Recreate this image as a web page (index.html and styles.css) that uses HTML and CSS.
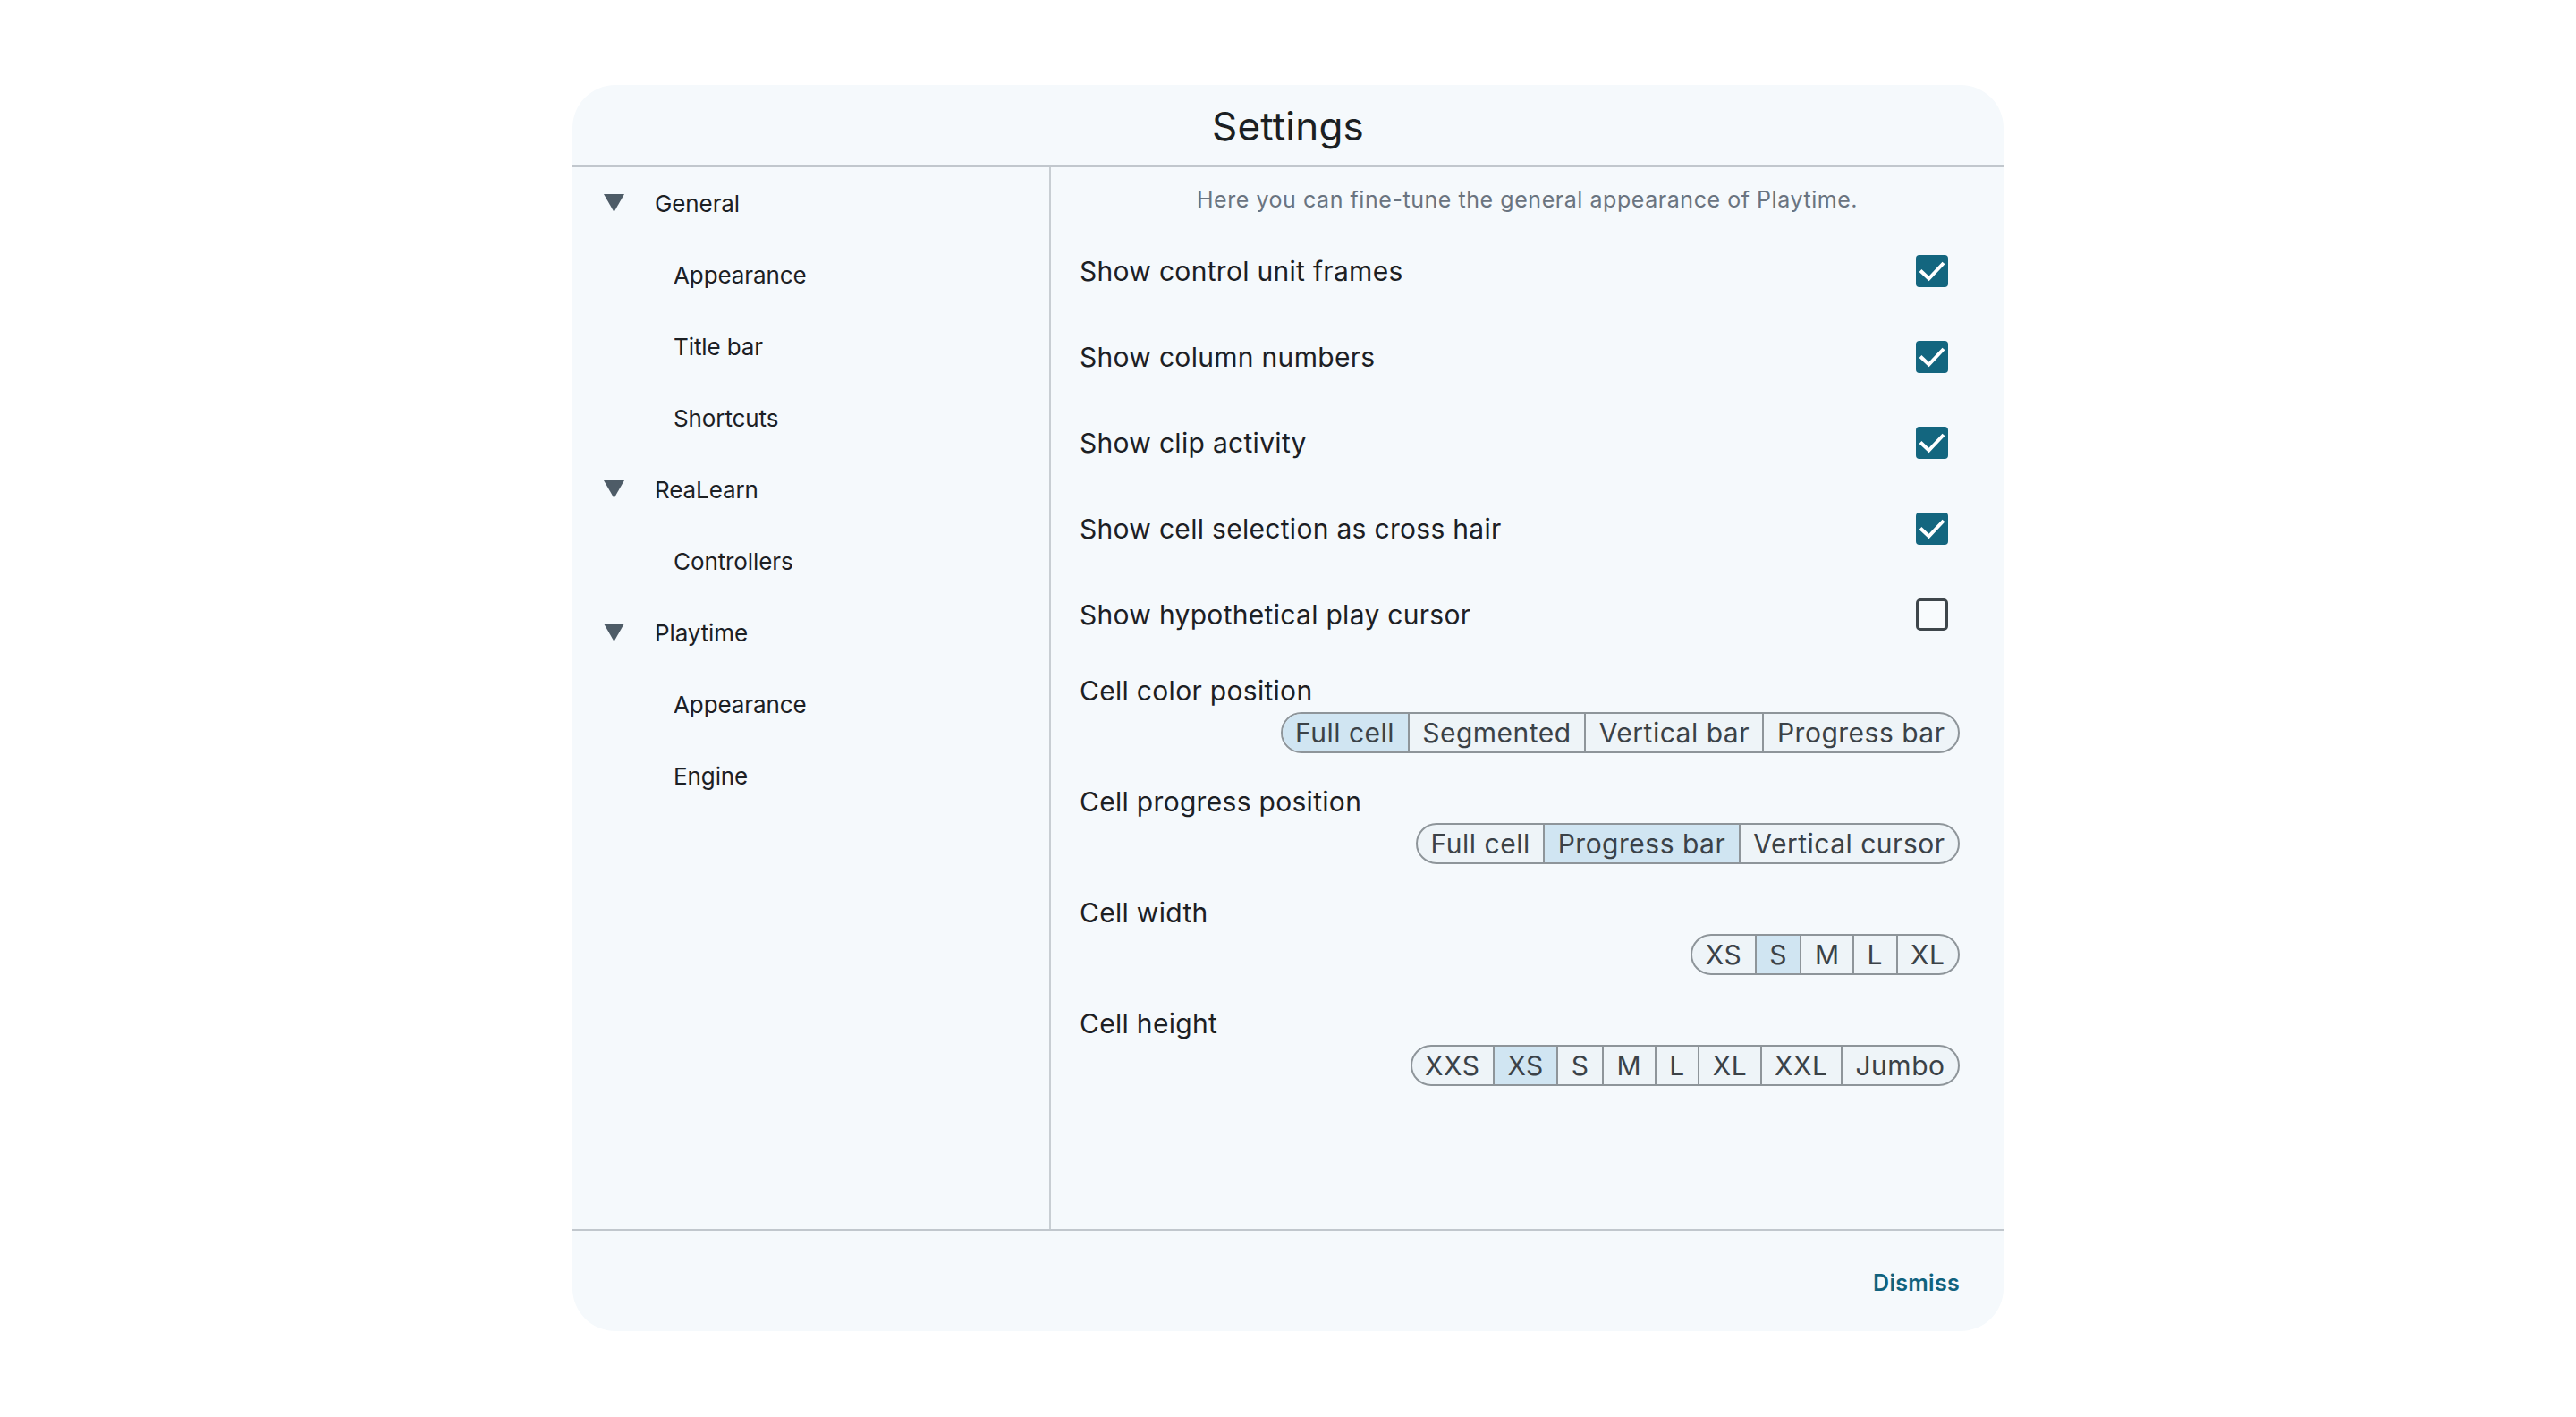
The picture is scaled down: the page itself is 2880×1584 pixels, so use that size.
FILE: index.html
```html
<!DOCTYPE html>
<html lang="en">
<head>
<meta charset="utf-8">
<title>Settings</title>
<link rel="stylesheet" href="styles.css">
</head>
<body>
<div class="dialog">
  <header class="dialog-header">
    <h1 class="dialog-title">Settings</h1>
  </header>
  <div class="dialog-body">
    <nav class="sidebar">
      <div class="nav-group">
        <svg class="caret" viewBox="0 0 23 20"><polygon points="0,0 23,0 11.5,20"/></svg>
        <span>General</span>
      </div>
      <div class="nav-item">Appearance</div>
      <div class="nav-item">Title bar</div>
      <div class="nav-item">Shortcuts</div>
      <div class="nav-group">
        <svg class="caret" viewBox="0 0 23 20"><polygon points="0,0 23,0 11.5,20"/></svg>
        <span>ReaLearn</span>
      </div>
      <div class="nav-item">Controllers</div>
      <div class="nav-group">
        <svg class="caret" viewBox="0 0 23 20"><polygon points="0,0 23,0 11.5,20"/></svg>
        <span>Playtime</span>
      </div>
      <div class="nav-item">Appearance</div>
      <div class="nav-item">Engine</div>
    </nav>
    <main class="content">
      <p class="description">Here you can fine-tune the general appearance of Playtime.</p>

      <div class="check-row">
        <span class="label">Show control unit frames</span>
        <svg class="checkbox" viewBox="0 0 36 36"><rect width="36" height="36" rx="4" class="cb-fill"/><polyline points="5,17.5 14.5,26.5 31,9" class="cb-mark"/></svg>
      </div>
      <div class="check-row">
        <span class="label">Show column numbers</span>
        <svg class="checkbox" viewBox="0 0 36 36"><rect width="36" height="36" rx="4" class="cb-fill"/><polyline points="5,17.5 14.5,26.5 31,9" class="cb-mark"/></svg>
      </div>
      <div class="check-row">
        <span class="label">Show clip activity</span>
        <svg class="checkbox" viewBox="0 0 36 36"><rect width="36" height="36" rx="4" class="cb-fill"/><polyline points="5,17.5 14.5,26.5 31,9" class="cb-mark"/></svg>
      </div>
      <div class="check-row">
        <span class="label">Show cell selection as cross hair</span>
        <svg class="checkbox" viewBox="0 0 36 36"><rect width="36" height="36" rx="4" class="cb-fill"/><polyline points="5,17.5 14.5,26.5 31,9" class="cb-mark"/></svg>
      </div>
      <div class="check-row">
        <span class="label">Show hypothetical play cursor</span>
        <svg class="checkbox" viewBox="0 0 36 36"><rect x="1.5" y="1.5" width="33" height="33" rx="3.5" class="cb-empty"/></svg>
      </div>

      <div class="seg-row">
        <span class="label">Cell color position</span>
        <div class="segmented">
          <span class="seg selected">Full cell</span>
          <span class="seg">Segmented</span>
          <span class="seg">Vertical bar</span>
          <span class="seg">Progress bar</span>
        </div>
      </div>
      <div class="seg-row">
        <span class="label">Cell progress position</span>
        <div class="segmented">
          <span class="seg">Full cell</span>
          <span class="seg selected">Progress bar</span>
          <span class="seg">Vertical cursor</span>
        </div>
      </div>
      <div class="seg-row">
        <span class="label">Cell width</span>
        <div class="segmented">
          <span class="seg">XS</span>
          <span class="seg selected">S</span>
          <span class="seg">M</span>
          <span class="seg">L</span>
          <span class="seg">XL</span>
        </div>
      </div>
      <div class="seg-row">
        <span class="label">Cell height</span>
        <div class="segmented">
          <span class="seg">XXS</span>
          <span class="seg selected">XS</span>
          <span class="seg">S</span>
          <span class="seg">M</span>
          <span class="seg">L</span>
          <span class="seg">XL</span>
          <span class="seg">XXL</span>
          <span class="seg">Jumbo</span>
        </div>
      </div>
    </main>
  </div>
  <footer class="dialog-footer">
    <button class="dismiss" type="button">Dismiss</button>
  </footer>
</div>
</body>
</html>
```

FILE: styles.css
```css
html, body {
  margin: 0;
  padding: 0;
  background: #ffffff;
}

body {
  font-family: Inter, "Noto Sans", "Liberation Sans", sans-serif;
  color: #1c2024;
}

.dialog {
  width: 1600px;
  height: 1393px;
  margin: 95px auto 0;
  background: #f5f9fc;
  border-radius: 48px;
  display: flex;
  flex-direction: column;
  overflow: hidden;
}

.dialog-header {
  height: 90px;
  flex: none;
  display: flex;
  align-items: center;
  justify-content: center;
  border-bottom: 2px solid #c1c7cd;
}

.dialog-title {
  margin: 0;
  font-size: 44px;
  font-weight: 400;
  color: #1b1f23;
  letter-spacing: 0.2px;
  padding-top: 2px;
}

.dialog-body {
  flex: 1;
  display: flex;
  min-height: 0;
}

.sidebar {
  width: 533px;
  flex: none;
  border-right: 2px solid #c8ced3;
}

.nav-group,
.nav-item {
  height: 80px;
  display: flex;
  align-items: center;
  font-size: 26px;
  letter-spacing: -0.1px;
  color: #1c2024;
}

.nav-group {
  padding-left: 35px;
}

.caret {
  width: 23px;
  height: 20px;
  margin-right: 34px;
  fill: #4e5c67;
}

.nav-item {
  padding-left: 113px;
}

.content {
  flex: 1;
  display: flex;
  flex-direction: column;
  padding-top: 20px;
}

.description {
  margin: 0 0 16px;
  text-align: center;
  font-size: 25px;
  line-height: 32px;
  letter-spacing: 0.55px;
  color: #6a7480;
}

.label {
  font-size: 30px;
  letter-spacing: 0.3px;
  color: #1c2024;
  line-height: 40px;
}

.check-row {
  height: 96px;
  display: flex;
  align-items: center;
  justify-content: space-between;
  padding: 0 62px 0 32px;
}

.checkbox {
  width: 36px;
  height: 36px;
  flex: none;
}

.cb-fill {
  fill: #13667f;
}

.cb-mark {
  fill: none;
  stroke: #ffffff;
  stroke-width: 4;
}

.cb-empty {
  fill: #f8fbfd;
  stroke: #3e464b;
  stroke-width: 3;
}

.seg-row {
  display: flex;
  flex-direction: column;
  padding: 17px 49px 17px 32px;
}

.seg-row .label {
  height: 40px;
}

.segmented {
  align-self: flex-end;
  margin-top: 4px;
  display: flex;
  height: 46px;
  box-sizing: border-box;
  border: 2px solid #8e959a;
  border-radius: 23px;
  overflow: hidden;
  background: #eef4f8;
}

.seg {
  display: flex;
  align-items: center;
  padding: 0 14.5px;
  font-size: 30px;
  letter-spacing: 0.5px;
  color: #3b4248;
  border-left: 2px solid #8e959a;
}

.seg:first-child {
  border-left: none;
}

.seg.selected {
  background: #d0e5f2;
}

.dialog-footer {
  flex: none;
  height: 112px;
  border-top: 2px solid #c1c7cd;
  display: flex;
  align-items: center;
  justify-content: flex-end;
  padding-right: 49px;
}

.dismiss {
  border: none;
  background: none;
  padding: 0;
  font-family: Inter, "Noto Sans", "Liberation Sans", sans-serif;
  font-size: 25px;
  font-weight: 600;
  letter-spacing: 0.3px;
  color: #10627e;
  margin-top: 4px;
}
```
